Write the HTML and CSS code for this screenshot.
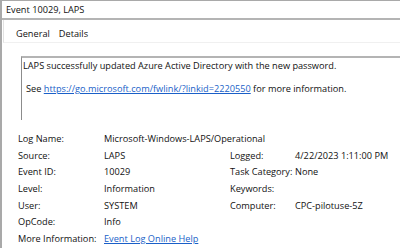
FILE: index.html
```html
<!DOCTYPE html>
<html lang="en">
<head>
  <meta charset="UTF-8" />
  <title>Event 10029, LAPS</title>
  <link rel="stylesheet" href="styles.css">
</head>
<body>
  <div class="window">
    <div class="titlebar">Event 10029, LAPS</div>

    <div class="tabs">
      <span class="tab active">General</span>
      <span class="tab">Details</span>
    </div>

    <div class="content">
      <div class="message">
        <p>LAPS successfully updated Azure Active Directory with the new password.</p>
        <p class="see">See <a href="#">https://go.microsoft.com/fwlink/?linkid=2220550</a> for more information.</p>
      </div>

      <div class="fields">
        <div class="row">
          <span class="label">Log Name:</span>
          <span class="value">Microsoft-Windows-LAPS/Operational</span>
        </div>
        <div class="row">
          <span class="label">Source:</span>
          <span class="value short">LAPS</span>
          <span class="label2">Logged:</span>
          <span class="value">4/22/2023 1:11:00 PM</span>
        </div>
        <div class="row">
          <span class="label">Event ID:</span>
          <span class="value short">10029</span>
          <span class="label2">Task Category:</span>
          <span class="value">None</span>
        </div>
        <div class="row">
          <span class="label">Level:</span>
          <span class="value short">Information</span>
          <span class="label2">Keywords:</span>
          <span class="value"></span>
        </div>
        <div class="row">
          <span class="label">User:</span>
          <span class="value short">SYSTEM</span>
          <span class="label2">Computer:</span>
          <span class="value">CPC-pilotuse-5Z</span>
        </div>
        <div class="row">
          <span class="label">OpCode:</span>
          <span class="value short">Info</span>
        </div>
        <div class="row">
          <span class="label">More Information:</span>
          <span class="value"><a href="#">Event Log Online Help</a></span>
        </div>
      </div>
    </div>
  </div>
</body>
</html>
```

FILE: styles.css
```css
* {
  box-sizing: border-box;
  margin: 0;
  padding: 0;
}
body {
  width: 400px;
  height: 248px;
  overflow: hidden;
  background: #fff;
  font-family: 'Open Sans', 'Noto Sans', sans-serif;
  font-size: 9.2px;
  color: #111;
  white-space: nowrap;
}
a {
  color: #1a5fc8;
  text-decoration: underline;
}
.window {
  height: 248px;
  border-left: 2px solid #a9a9a9;
}
/* Barra titolo */
.titlebar {
  height: 20px;
  border-top: 1px solid #a9a9a9;
  border-bottom: 2px solid #b4b4b4;
  padding: 2px 0 0 4px;
  line-height: 14px;
}
/* Schede */
.tabs {
  display: flex;
  height: 23px;
  padding-left: 9px;
  border-bottom: 1px solid #f0f0f0;
  border-left: 1px solid #e2e2e2;
  margin-left: 1px;
}
.tab {
  padding: 7px 3px 0;
  line-height: 14px;
}
.tab.active {
  padding-right: 6px;
}
.content {
  padding: 13px 0 0 16px;
}
/* Riquadro messaggio */
.message {
  height: 64px;
  margin-left: 3px;
  border-top: 2px solid #b4b4b4;
  border-left: 1px solid #8c8c8c;
  padding: 1px 0 0 1px;
  line-height: 14px;
}
.message .see {
  margin-top: 9px;
  padding-left: 3px;
}
/* Campi */
.fields {
  padding: 11px 0 0 0;
}
.row {
  display: flex;
  height: 16.7px;
  line-height: 16px;
}
.label {
  width: 86px;
  flex-shrink: 0;
}
.value.short {
  width: 126px;
  flex-shrink: 0;
}
.label2 {
  width: 65px;
  flex-shrink: 0;
}
```
